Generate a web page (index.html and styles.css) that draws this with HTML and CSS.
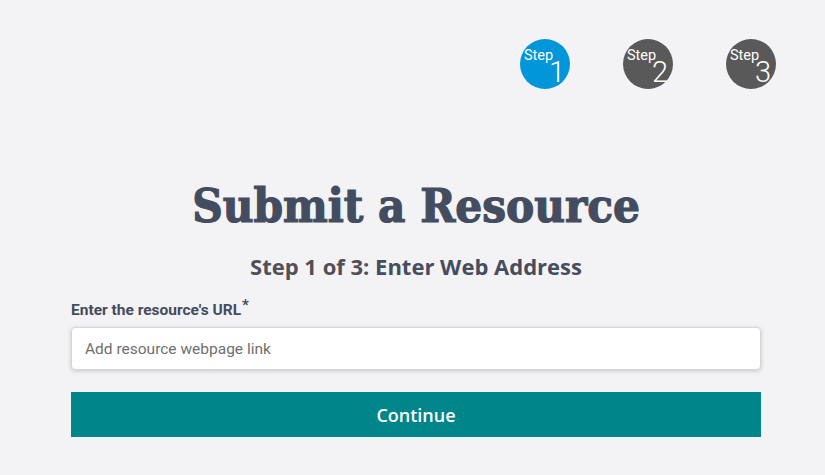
FILE: index.html
```html
<!DOCTYPE html>
<html>
<head>
<meta charset="utf-8">
<link rel="stylesheet" href="styles.css">
</head>
<body>
<div class="page">
  <div class="steps">
    <div class="step active"><span class="step-word">Step</span><span class="step-num">1</span></div>
    <div class="step"><span class="step-word">Step</span><span class="step-num">2</span></div>
    <div class="step"><span class="step-word">Step</span><span class="step-num">3</span></div>
  </div>
  <div class="content">
    <h1 class="title">Submit a Resource</h1>
    <h2 class="subtitle"><span class="sub-step">Step 1 of 3:</span> Enter Web Address</h2>
    <form class="form">
      <label class="label" for="url">Enter the resource's URL<sup class="req">*</sup></label>
      <input class="input" id="url" type="text" placeholder="Add resource webpage link">
      <button class="btn" type="button">Continue</button>
    </form>
  </div>
</div>
</body>
</html>
```
FILE: styles.css
```css
html, body {
  margin: 0;
  padding: 0;
  background: #f3f3f5;
}
body {
  font-family: "Open Sans", "Noto Sans", sans-serif;
}
.page {
  width: 825px;
  height: 475px;
  overflow: hidden;
}
.steps {
  display: flex;
  justify-content: flex-end;
  gap: 53px;
  padding: 39px 49px 0 0;
}
.step {
  width: 50px;
  height: 50px;
  border-radius: 50%;
  background: #595959;
  color: #fff;
  position: relative;
  font-family: "Roboto", "Noto Sans", sans-serif;
}
.step.active {
  background: #0096d9;
}
.step-word {
  position: absolute;
  left: 4px;
  top: 9px;
  font-size: 14.5px;
  line-height: 15px;
}
.step-num {
  position: absolute;
  left: 29px;
  top: 18px;
  font-size: 29px;
  line-height: 30px;
  font-weight: 300;
}
.content {
  padding: 0 64px 0 71px;
  text-align: center;
}
.title {
  margin: 89px 0 0;
  font-family: "DejaVu Serif Condensed", "DejaVu Serif", serif;
  font-stretch: condensed;
  font-weight: bold;
  font-size: 47px;
  line-height: 56px;
  color: #444c60;
  -webkit-text-stroke: 1.2px #444c60;
  letter-spacing: 0px;
}
.subtitle {
  margin: 18px 0 0;
  font-size: 22px;
  line-height: 28px;
  font-weight: 700;
  color: #454d60;
}
.sub-step {
  color: #4f4f55;
}
.form {
  margin-top: 21px;
  text-align: left;
  display: flex;
  flex-direction: column;
}
.label {
  font-family: "Roboto", "Noto Sans", sans-serif;
  font-weight: 700;
  font-size: 15.5px;
  line-height: 18px;
  color: #454b5c;
  letter-spacing: 0px;
}
.req {
  font-size: 15px;
  vertical-align: top;
  line-height: 10px;
  position: relative;
  top: -1px;
  margin-left: 1px;
}
.input {
  margin-top: 8px;
  height: 43px;
  box-sizing: border-box;
  border: 1px solid #d5d5d8;
  border-radius: 4px;
  background: #fff;
  box-shadow: 0 1px 4px rgba(0,0,0,0.18);
  padding: 0 13px;
  font-family: "Roboto", "Noto Sans", sans-serif;
  font-size: 15.5px;
  color: #333;
}
.input::placeholder {
  color: #6f6f6f;
}
.btn {
  margin-top: 22px;
  height: 45px;
  border: none;
  background: #00868a;
  color: #fff;
  font-family: "Open Sans", "Noto Sans", sans-serif;
  font-size: 18px;
  font-weight: 600;
  cursor: pointer;
}
```
